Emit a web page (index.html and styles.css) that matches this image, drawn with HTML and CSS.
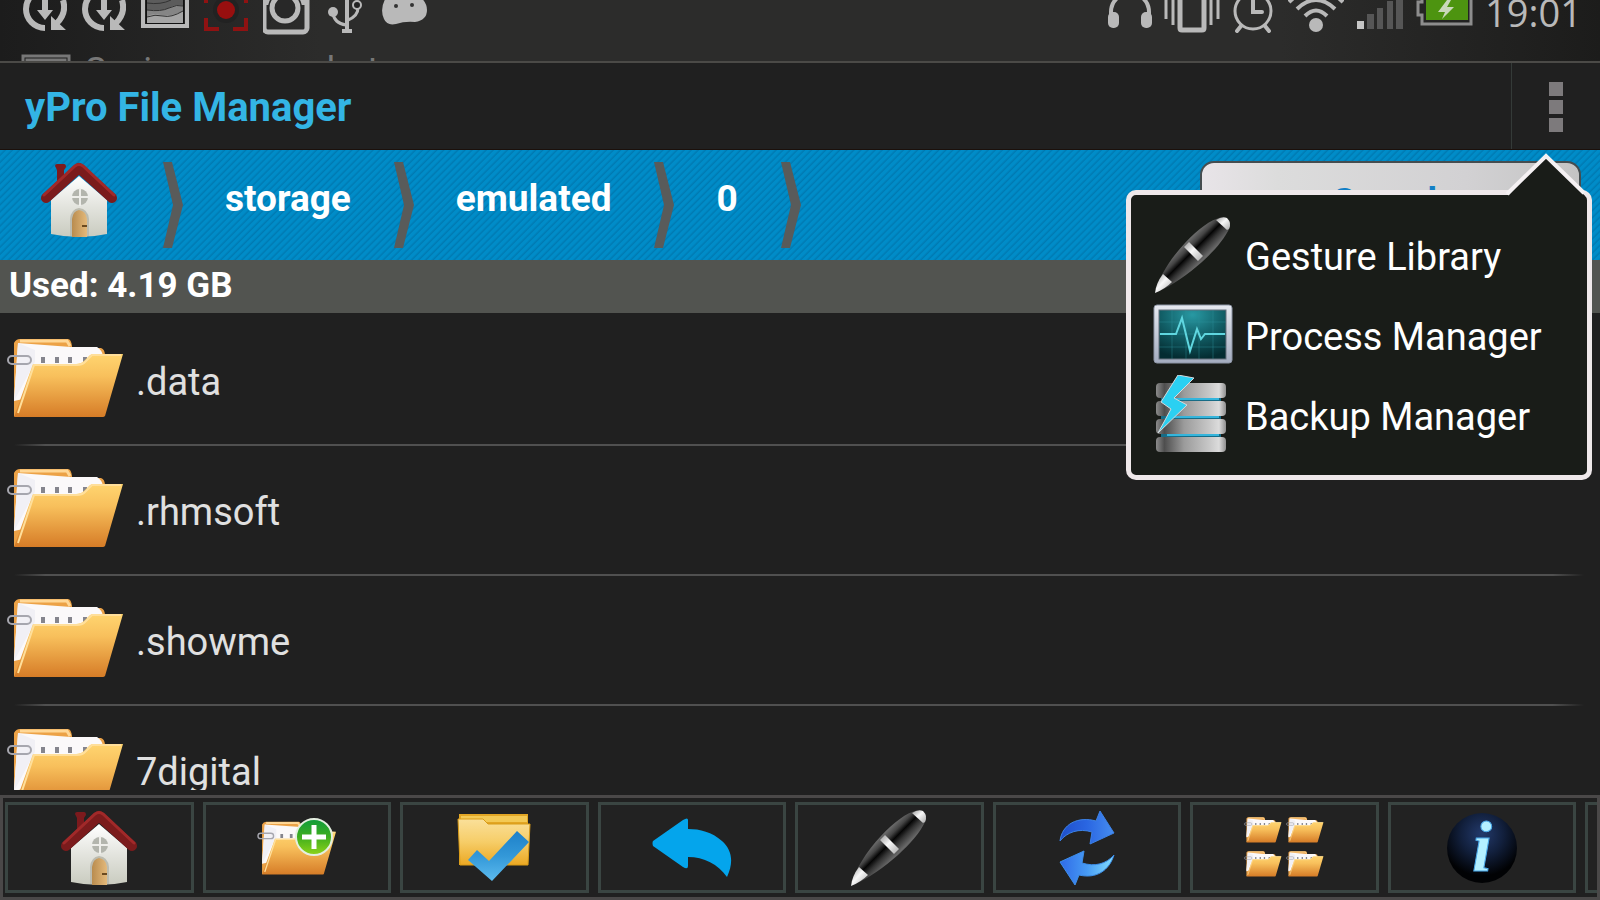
FILE: index.html
```html
<!DOCTYPE html>
<html lang="en">
<head>
  <meta charset="UTF-8" />
  <meta name="viewport" content="width=device-width, initial-scale=1" />
  <title>yPro File Manager</title>
  <link rel="stylesheet" href="styles.css">
</head>
<body>
  <!-- Device status bar, with the next notification scrolling in -->
  <div class="status">
    <div class="status-row">
      <svg width="44" height="36"><use href="#sync"/></svg>
      <svg width="44" height="36"><use href="#sync"/></svg>
      <svg width="48" height="36" viewBox="0 0 48 36">
        <path d="M2-10V26H46V-10" fill="none" stroke="#b9b9b9" stroke-width="4"/>
        <path d="M5 0H43V24H5z" fill="#111"/>
        <path d="M6 0H42V23H6z" fill="#a5a5a5"/>
        <path d="M6 0H42V6Q34 4 28 8T6 10z" fill="#5c5c5c"/>
        <path d="M6 10Q20 12 28 8T42 6V11Q30 17 20 15T6 17z" fill="#858585"/>
        <path d="M6 3Q20 5 30 0M6 10Q20 12 28 8T42 6M6 17Q14 14 22 16T42 11" fill="none" stroke="#333" stroke-width="1"/>
      </svg>
      <svg width="44" height="36" viewBox="0 0 44 36">
        <circle cx="22" cy="10" r="13" fill="#222"/>
        <circle cx="22" cy="10" r="9" fill="#980f0f"/>
        <path d="M2 18V29H15M42 18V29H29M0 1H4M40 1H44" fill="none" stroke="#8f1212" stroke-width="4"/>
      </svg>
      <svg width="48" height="36" viewBox="0 0 48 36">
        <rect x="1" y="-14" width="43" height="46" rx="4" fill="none" stroke="#b9b9b9" stroke-width="5"/>
        <path d="M1 0H12V5H1zM32 0H44V5H32z" fill="#b9b9b9"/>
        <circle cx="22" cy="8" r="17" fill="#282828"/>
        <circle cx="22" cy="8" r="13" fill="none" stroke="#b9b9b9" stroke-width="5"/>
      </svg>
      <svg width="40" height="36" viewBox="0 0 40 36">
        <path d="M21-2V31M16 31H26" fill="none" stroke="#b9b9b9" stroke-width="4"/>
        <path d="M7 13Q8 23 20 25M32 8Q32 16 22 20" fill="none" stroke="#b9b9b9" stroke-width="3"/>
        <circle cx="7" cy="12" r="5" fill="#b9b9b9"/>
        <circle cx="31" cy="5" r="4" fill="#222" stroke="#b9b9b9" stroke-width="2"/>
      </svg>
      <svg width="46" height="36" viewBox="0 0 46 36">
        <path d="M6-4Q-2 8 3 19Q6 26 15 24Q24 21 34 22Q46 20 46 10Q46 2 38-4z" fill="#b9b9b9"/>
        <circle cx="15" cy="6" r="2" fill="#333"/>
        <circle cx="31" cy="5" r="2" fill="#333"/>
      </svg>

      <div class="status-right">
        <svg width="44" height="36" viewBox="0 0 44 36">
          <path d="M3 18V12A19 19 0 0 1 41 12V18" fill="none" stroke="#b9b9b9" stroke-width="4"/>
          <rect x="0" y="12" width="11" height="16" rx="5" fill="#b9b9b9"/>
          <rect x="33" y="12" width="11" height="16" rx="5" fill="#b9b9b9"/>
        </svg>
        <svg width="56" height="36" viewBox="0 0 56 36">
          <path d="M2-1V19M9-1V25M47-1V25M54-1V19" stroke="#b9b9b9" stroke-width="3"/>
          <path d="M16-4V28Q16 30 18 30H38Q40 30 40 28V-4" fill="none" stroke="#b9b9b9" stroke-width="5"/>
        </svg>
        <svg width="44" height="36" viewBox="0 0 44 36">
          <circle cx="21" cy="11" r="18" fill="none" stroke="#b9b9b9" stroke-width="3"/>
          <path d="M21 0V12H30M9 26L5 31M33 26L37 31" fill="none" stroke="#b9b9b9" stroke-width="4" stroke-linecap="round"/>
        </svg>
        <svg width="56" height="36" viewBox="0 0 56 36">
          <circle cx="28" cy="25" r="7" fill="#b9b9b9"/>
          <path d="M17 16Q28 5 39 16M9 9Q28-9 47 9M1 2Q5-2 10-5M55 2Q51-2 46-5" fill="none" stroke="#b9b9b9" stroke-width="4"/>
        </svg>
        <svg width="48" height="36" viewBox="0 0 48 36">
          <path d="M1 21H8V29H1z" fill="#c6c6c6"/>
          <path d="M11 14H18V29H11zM21 8H27V29H21zM31 1H37V29H31zM40 0H47V29H40z" fill="#565656"/>
        </svg>
        <svg width="57" height="36" viewBox="0 0 57 36">
          <path d="M6-2V2H2V15H6V24H55V-2" fill="none" stroke="#8d8d8d" stroke-width="3"/>
          <path d="M10 0H52V20H10z" fill="#4d9410"/>
          <path d="M31 0L22 12H29L26 19L38 7H31L35 0z" fill="#c9d8ba"/>
        </svg>
        <time class="clock">19:01</time>
      </div>
    </div>
    <div class="ticker">
      <svg width="50" height="40" viewBox="0 0 50 40"><path d="M2 38V2H48V38M6 38V6H44V38" fill="none" stroke="#777" stroke-width="3"/></svg>
      <span>Saving screenshot</span>
    </div>
  </div>

  <header class="actionbar">
    <h1>yPro File Manager</h1>
    <button class="overflow" aria-label="More options"><i></i><i></i><i></i></button>

    <div class="menu">
      <svg class="menu-arrow" width="84" height="46" viewBox="0 0 84 46">
        <path d="M4 43L42 2L81 43V46H4z" fill="#191c18"/>
        <path d="M3 41L42 3L80 40" fill="none" stroke="#f5f1f3" stroke-width="4"/>
      </svg>
      <a href="#gesture"><svg width="80" height="80"><use href="#pen"/></svg><span>Gesture Library</span></a>
      <a href="#process">
        <svg width="80" height="80" viewBox="0 0 80 80">
          <rect x="1" y="10" width="78" height="58" rx="3" fill="url(#frame)" stroke="#8d95a5" stroke-width="1"/>
          <rect x="6" y="15" width="67" height="49" fill="url(#screen)" stroke="#66717c" stroke-width="1"/>
          <path d="M19 15V64M33 15V64M46 15V64M60 15V64M6 27H73M6 39H73M6 52H73" stroke="#2e949b" stroke-opacity=".4" stroke-width="1"/>
          <path d="M7 39H23L29 23L37 56L44 34L48 44L52 39H72" fill="none" stroke="#5fd6df" stroke-width="2"/>
        </svg>
        <span>Process Manager</span>
      </a>
      <a href="#backup">
        <svg width="80" height="80" viewBox="0 0 80 80">
          <path d="M8 14H68V68H8z" fill="#176c86"/>
          <path d="M14 24H66M14 42H66M14 60H66" stroke="#35b5dc" stroke-width="2"/>
          <rect x="3" y="8" width="70" height="15" rx="4" fill="url(#metal)"/>
          <rect x="3" y="26" width="70" height="15" rx="4" fill="url(#metal)"/>
          <rect x="3" y="44" width="70" height="15" rx="4" fill="url(#metal)"/>
          <rect x="3" y="62" width="70" height="15" rx="4" fill="url(#metal)"/>
          <path d="M25 0L41 3L21 23L34 30L5 58L18 34L8 27z" fill="#2bd0f2" stroke="#d3dade" stroke-width="1"/>
        </svg>
        <span>Backup Manager</span>
      </a>
    </div>
  </header>

  <nav class="path">
    <a class="path-home" href="#home" aria-label="Home"><svg width="76" height="76"><use href="#house"/></svg></a>
    <svg class="chevron" width="21" height="86"><use href="#chevron"/></svg>
    <a class="crumb" href="#storage">storage</a>
    <svg class="chevron" width="21" height="86"><use href="#chevron"/></svg>
    <a class="crumb" href="#emulated">emulated</a>
    <svg class="chevron" width="21" height="86"><use href="#chevron"/></svg>
    <a class="crumb" href="#0">0</a>
    <svg class="chevron" width="21" height="86"><use href="#chevron"/></svg>
    <button class="search">Search</button>
  </nav>

  <div class="usage">Used: 4.19 GB</div>

  <main class="files">
    <ul>
      <li><a href="#data"><svg width="117" height="84"><use href="#folder"/></svg><span>.data</span></a></li>
      <li><a href="#rhmsoft"><svg width="117" height="84"><use href="#folder"/></svg><span>.rhmsoft</span></a></li>
      <li><a href="#showme"><svg width="117" height="84"><use href="#folder"/></svg><span>.showme</span></a></li>
      <li><a href="#7digital"><svg width="117" height="84"><use href="#folder"/></svg><span>7digital</span></a></li>
    </ul>
  </main>

  <div class="toolbar">
    <button aria-label="Home"><svg width="76" height="76"><use href="#house"/></svg></button>
    <button aria-label="New folder">
      <svg width="80" height="60" viewBox="0 0 80 60">
        <use href="#folder" y="3" width="80" height="57"/>
        <circle cx="57" cy="19" r="18" fill="url(#green)" stroke="#e4efe0" stroke-width="2"/>
        <path d="M57 7V31M45 19H69" stroke="#fff" stroke-width="5"/>
      </svg>
    </button>
    <button aria-label="Select">
      <svg width="74" height="70" viewBox="0 0 74 70">
        <path d="M2 1H71V52H2z" fill="#e2a625"/>
        <path d="M4 3H70V9H4z" fill="#f3c955"/>
        <path d="M1 6H26L31 11H73L71 52H3z" fill="url(#yellow)" stroke="#d99b17" stroke-width="1"/>
        <path d="M11 47L20 37L32 48L60 18L72 29L35 68z" fill="url(#tick)"/>
      </svg>
    </button>
    <button aria-label="Back">
      <svg width="80" height="60" viewBox="0 0 80 60">
        <path d="M1 23Q0 25 1 28L31 49Q36 52 36 48V39C52 39 66 46 75 59C82 44 80 32 70 23C60 14 48 11 36 11V2Q36-1 31 2z" fill="#04a5ec"/>
      </svg>
    </button>
    <button aria-label="Gesture"><svg width="80" height="80"><use href="#pen"/></svg></button>
    <button aria-label="Refresh">
      <svg width="56" height="76" viewBox="0 0 56 76">
        <path d="M1 31C3 14 19 6 37 11L41 1L55 23L31 34L33 22C20 18 8 22 1 31z" fill="url(#blue1)" stroke="#3c82e6" stroke-width="1"/>
        <path d="M55 45C50 61 37 69 20 65L16 75L1 52L25 41L23 53C36 57 47 54 55 45z" fill="url(#blue2)" stroke="#3c8eea" stroke-width="1"/>
      </svg>
    </button>
    <button aria-label="View">
      <svg width="80" height="62" viewBox="0 0 80 62">
        <use href="#folder" width="38" height="27"/>
        <use href="#folder" x="42" width="38" height="27"/>
        <use href="#folder" y="34" width="38" height="27"/>
        <use href="#folder" x="42" y="34" width="38" height="27"/>
      </svg>
    </button>
    <button aria-label="Info">
      <svg width="72" height="72" viewBox="0 0 72 72">
        <circle cx="36" cy="36" r="35" fill="url(#orb)"/>
        <text class="info" x="36" y="59" text-anchor="middle">i</text>
      </svg>
    </button>
    <button aria-label="More"></button>
  </div>

  <!-- Shared icons and gradients -->
  <svg class="sprite" width="0" height="0">
    <defs>
      <linearGradient id="front" x2="0" y2="1"><stop stop-color="#ffd570"/><stop offset=".35" stop-color="#f8c05c"/><stop offset="1" stop-color="#d67c27"/></linearGradient>
      <linearGradient id="wall" x2="0" y2="1"><stop stop-color="#fff"/><stop offset=".5" stop-color="#e3e4de"/><stop offset="1" stop-color="#c9cbbf"/></linearGradient>
      <linearGradient id="door"><stop stop-color="#b98c4e"/><stop offset="1" stop-color="#e4b97a"/></linearGradient>
      <linearGradient id="barrel" gradientUnits="userSpaceOnUse" x1="30" y1="28" x2="48" y2="46"><stop stop-color="#777"/><stop offset=".3" stop-color="#444"/><stop offset=".5" stop-color="#050505"/><stop offset=".7" stop-color="#333"/><stop offset="1" stop-color="#666"/></linearGradient>
      <linearGradient id="steel" x2="1" y2="1"><stop stop-color="#999"/><stop offset=".45" stop-color="#f8f8f8"/><stop offset="1" stop-color="#aaa"/></linearGradient>
      <linearGradient id="frame" x2="0" y2="1"><stop stop-color="#e6e9f0"/><stop offset="1" stop-color="#a3acbf"/></linearGradient>
      <radialGradient id="screen" cx=".5" cy=".1" r=".9"><stop stop-color="#2899a3"/><stop offset=".5" stop-color="#126068"/><stop offset="1" stop-color="#042c31"/></radialGradient>
      <linearGradient id="metal"><stop stop-color="#8b8b8b"/><stop offset=".12" stop-color="#4e4e4e"/><stop offset=".4" stop-color="#9b9b9b"/><stop offset=".75" stop-color="#c6c6c6"/><stop offset=".9" stop-color="#dcdcdc"/><stop offset="1" stop-color="#8f8f8f"/></linearGradient>
      <linearGradient id="green" x2="0" y2="1"><stop stop-color="#0f9c3c"/><stop offset=".5" stop-color="#3fae1e"/><stop offset="1" stop-color="#8ed41a"/></linearGradient>
      <linearGradient id="yellow" x2="0" y2="1"><stop stop-color="#fae09a"/><stop offset=".5" stop-color="#f6cd68"/><stop offset="1" stop-color="#eba823"/></linearGradient>
      <linearGradient id="tick" x2="0" y2="1"><stop stop-color="#1d80c9"/><stop offset=".5" stop-color="#3398d8"/><stop offset="1" stop-color="#5cbbef"/></linearGradient>
      <linearGradient id="blue1"><stop stop-color="#1f4fcb"/><stop offset=".5" stop-color="#2a66e2"/><stop offset="1" stop-color="#468df0"/></linearGradient>
      <linearGradient id="blue2"><stop stop-color="#2f6ae6"/><stop offset=".5" stop-color="#479bf5"/><stop offset="1" stop-color="#84e0ff"/></linearGradient>
      <radialGradient id="orb" cx=".5" cy=".3" r=".6"><stop stop-color="#233a6c"/><stop offset=".5" stop-color="#12203d"/><stop offset="1" stop-color="#010204"/></radialGradient>
    </defs>
    <symbol id="sync" viewBox="0 0 44 36">
      <path d="M22 28A19 19 0 0 1 22-10M40 0Q44 13 34 23" fill="none" stroke="#b9b9b9" stroke-width="6"/>
      <path d="M28 16L43 30H28zM19-2H25V10H30L22 20L14 10H19z" fill="#b9b9b9"/>
    </symbol>
    <symbol id="chevron" viewBox="0 0 21 86">
      <path d="M0 0H9L20 43L9 86H0L10 43z" fill="#595b5a"/>
    </symbol>
    <symbol id="house" viewBox="0 0 76 76">
      <path d="M14 4Q14 2 16 2H23Q25 2 25 5L23 8V22L16 27V8z" fill="#7c1a1d"/>
      <path d="M10 38L38 14L66 38V72Q38 78 10 72z" fill="url(#wall)"/>
      <path d="M5 36L38 6L71 36" fill="none" stroke="#7b1b1c" stroke-width="10" stroke-linecap="round" stroke-linejoin="round"/>
      <path d="M3 33L34 4Q38 1 42 4L73 33" fill="none" stroke="#a12929" stroke-width="3" stroke-linecap="round"/>
      <circle cx="39" cy="35" r="8" fill="#b3b5ad"/>
      <path d="M39 26V44M30 35H48" stroke="#eeeeea" stroke-width="2"/>
      <path d="M29 74V57Q30 47 38 46Q47 47 48 57V74z" fill="#bcbcb0"/>
      <path d="M31 75V57Q32 49 38 48Q45 49 46 57V75z" fill="url(#door)"/>
      <path d="M41 64H46" stroke="#6b4a20" stroke-width="2"/>
    </symbol>
    <symbol id="folder" viewBox="0 0 117 84">
      <path d="M7 78V5Q9 1 13 1H61Q64 1 65 8V10H94Q98 11 98 18V40L20 78z" fill="#eca247"/>
      <path d="M13 3H60L63 8" fill="none" stroke="#ffd796" stroke-width="3"/>
      <path d="M11 5L64 9H90Q95 12 96 18L88 45L7 63z" fill="#fbf9fa"/>
      <path d="M11 5L28 12V24L7 63z" fill="#f1f0f5"/>
      <path d="M34 19H38V25H34zM48 19H52V25H48zM61 19H65V25H61zM76 19H80V25H76z" fill="#85858d"/>
      <path d="M7 79L26 26H69Q74 26 77 23L83 17Q85 16 87 16H116L98 78Q97 79 96 79z" fill="url(#front)"/>
      <path d="M11 75L27 27H70Q75 27 78 24L85 17H114" fill="none" stroke="#ffdf9b" stroke-width="2"/>
      <rect x="1" y="18" width="23" height="8" rx="4" fill="none" stroke="#a6a6ae" stroke-width="2"/>
    </symbol>
    <symbol id="pen" viewBox="0 0 80 80">
      <path d="M2 77C6 62 17 44 32 28C45 14 57 5 69 2Q77 4 77 12C71 25 61 36 49 47C35 59 19 71 4 77z" fill="url(#barrel)"/>
      <path d="M2 78Q3 68 10 59L19 67Q12 74 2 78z" fill="url(#steel)"/>
      <path d="M63 5Q69 1 74 3Q79 8 76 14L74 15z" fill="url(#steel)"/>
      <path d="M31 32L36 27L50 41L45 46z" fill="url(#steel)"/>
    </symbol>
  </svg>
</body>
</html>
```
FILE: styles.css
```css
* {
  box-sizing: border-box;
}
body {
  font-family: Roboto, "Liberation Sans", sans-serif;
  margin: 0;
  height: 100vh;
  display: flex;
  flex-direction: column;
  overflow: hidden;
  background: #202020;
  color: #fff;
}
a {
  color: inherit;
  text-decoration: none;
}
button {
  font: inherit;
  color: inherit;
  padding: 0;
  cursor: pointer;
}
svg {
  display: block;
  flex: none;
}

/* Status bar */
.status {
  flex: none;
  height: 63px;
  overflow: hidden;
  background: linear-gradient(90deg, #1c1c1c, #2c2c2b 20%, #2c2c2b 80%, #1c1c1b);
  border-bottom: 2px solid #4b4a47;
}
.status-row {
  display: flex;
  gap: 15px;
  height: 54px;
  padding: 0 18px 0 23px;
}
.status-right {
  display: flex;
  gap: 12px;
  margin-left: auto;
}
.clock {
  font-family: "Open Sans", "Noto Sans", sans-serif;
  font-size: 38px;
  line-height: 24px;
  color: #b9b9b9;
}
.ticker {
  display: flex;
  gap: 14px;
  padding-left: 21px;
  font-size: 36px;
  line-height: 34px;
  color: #777;
}

/* Title bar */
.actionbar {
  position: relative;
  flex: none;
  display: flex;
  justify-content: space-between;
  height: 87px;
  border-bottom: 1px solid #1b100b;
}
h1 {
  margin: 0;
  padding-left: 25px;
  font-size: 40px;
  line-height: 90px;
  font-weight: 700;
  color: #33b5e5;
}
.overflow {
  display: flex;
  flex-direction: column;
  align-items: center;
  justify-content: center;
  gap: 4px;
  width: 89px;
  padding-top: 1px;
  background: none;
  border: none;
  border-left: 1px solid #343a38;
}
.overflow i {
  width: 14px;
  height: 14px;
  background: #7d7a7c;
}

/* Drop-down menu */
.menu {
  position: absolute;
  z-index: 1;
  top: 127px;
  right: 8px;
  width: 466px;
  padding: 20px 22px;
  background: #191c18;
  border: 5px solid #efe8ea;
  border-radius: 10px;
}
.menu-arrow {
  position: absolute;
  top: -42px;
  right: -1px;
}
.menu a {
  display: flex;
  align-items: center;
  gap: 12px;
  height: 80px;
  font-size: 38px;
}
.menu span,
.files span {
  padding-top: 3px;
}

/* Path bar */
.path {
  flex: none;
  display: flex;
  align-items: center;
  height: 110px;
  padding: 0 19px 0 41px;
  background: repeating-linear-gradient(135deg, #008cc8 0, #008cc8 2px, #007ab2 4px, #008cc8 5px);
}
.path-home {
  padding-bottom: 10px;
  margin-right: 46px;
}
.crumb {
  padding: 0 43px 14px 41px;
  font-size: 37px;
  font-weight: 700;
}
.search {
  width: 381px;
  height: 88px;
  margin-left: auto;
  padding-bottom: 8px;
  font-size: 37px;
  font-weight: 700;
  color: #127fc6;
  background: linear-gradient(90deg, #e8e4e8, #dcdcdc 20%, #d2d1d3 70%, #c4c4c4);
  border: 2px solid #454d50;
  border-radius: 14px;
}

.usage {
  flex: none;
  height: 53px;
  padding-left: 9px;
  font-size: 35px;
  line-height: 52px;
  font-weight: 700;
  background: #525450;
}

/* File list */
.files {
  flex: 1;
  min-height: 0;
  padding-top: 3px;
  overflow: hidden;
}
.files ul {
  margin: 0;
  padding: 0;
  list-style: none;
}
.files li {
  height: 130px;
  padding: 0 16px 2px 7px;
  background: linear-gradient(90deg, transparent, #505050 2%, #505050 98%, transparent) 14px 100% / calc(100% - 30px) 2px no-repeat;
}
.files a {
  display: flex;
  align-items: center;
  gap: 12px;
  height: 128px;
  font-size: 38px;
  color: #e0e0e0;
}

/* Bottom toolbar */
.toolbar {
  flex: none;
  display: grid;
  grid-auto-flow: column;
  grid-auto-columns: calc((100% - 82px) / 8);
  gap: 9px;
  height: 105px;
  margin-top: 5px;
  padding: 4px 2px;
  overflow: hidden;
  border: 3px solid #4a4848;
}
.toolbar button {
  display: flex;
  align-items: center;
  justify-content: center;
  background: #222;
  border: 3px solid #3a4542;
}
.info {
  font: italic 700 72px "Liberation Serif", serif;
  fill: #b4f0ff;
  stroke: #4aa8e8;
  stroke-width: 1px;
}
```
